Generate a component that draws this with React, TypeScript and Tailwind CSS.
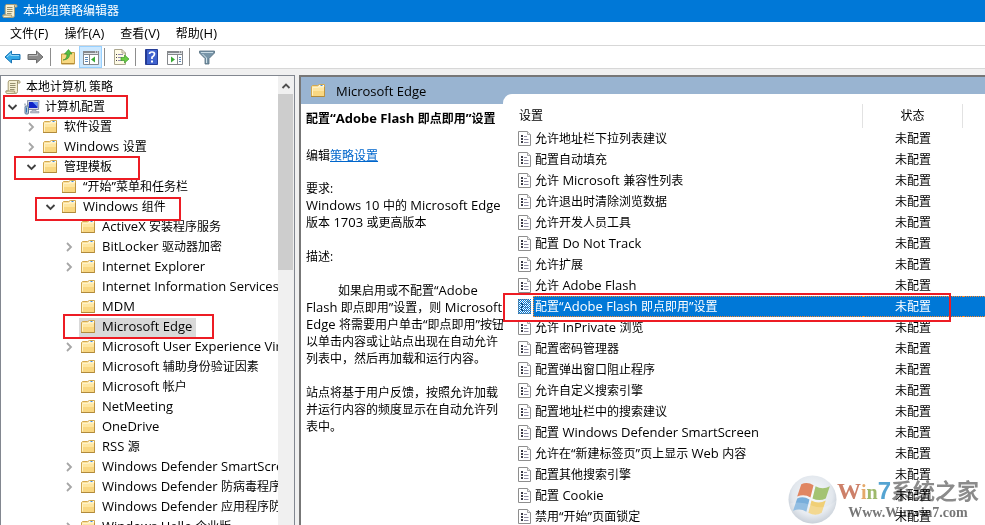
import * as React from "react";

type IconName = "scroll" | "computer" | "folder";

type TreeRow = {
  label: string;
  level: number;
  icon?: IconName;
  state?: "open" | "closed";
  selected?: boolean;
  mark?: string;
};

const menus = ["文件(F)", "操作(A)", "查看(V)", "帮助(H)"];

const indents = ["pl-[5px]", "pl-[24px]", "pl-[43px]", "pl-[62px]"];

const tree: TreeRow[] = [
  { label: "计算机配置", level: 0, icon: "computer", state: "open", mark: "left-[2px] -top-[2px] w-[125px] h-[24px]" },
  { label: "软件设置", level: 1, state: "closed" },
  { label: "Windows 设置", level: 1, state: "closed" },
  { label: "管理模板", level: 1, state: "open", mark: "left-[13px] -top-[1px] w-[126px] h-[24px]" },
  { label: "“开始”菜单和任务栏", level: 2 },
  { label: "Windows 组件", level: 2, state: "open", mark: "left-[34px] top-0 w-[146px] h-[24px]" },
  { label: "ActiveX 安装程序服务", level: 3 },
  { label: "BitLocker 驱动器加密", level: 3, state: "closed" },
  { label: "Internet Explorer", level: 3, state: "closed" },
  { label: "Internet Information Services", level: 3 },
  { label: "MDM", level: 3 },
  { label: "Microsoft Edge", level: 3, selected: true, mark: "left-[62px] -top-[3px] w-[151px] h-[25px]" },
  { label: "Microsoft User Experience Virtualization", level: 3, state: "closed" },
  { label: "Microsoft 辅助身份验证因素", level: 3 },
  { label: "Microsoft 帐户", level: 3 },
  { label: "NetMeeting", level: 3 },
  { label: "OneDrive", level: 3 },
  { label: "RSS 源", level: 3 },
  { label: "Windows Defender SmartScreen", level: 3, state: "closed" },
  { label: "Windows Defender 防病毒程序", level: 3, state: "closed" },
  { label: "Windows Defender 应用程序防护", level: 3 },
  { label: "Windows Hello 企业版", level: 3, state: "closed" },
];

const settings = [
  "允许地址栏下拉列表建议",
  "配置自动填充",
  "允许 Microsoft 兼容性列表",
  "允许退出时清除浏览数据",
  "允许开发人员工具",
  "配置 Do Not Track",
  "允许扩展",
  "允许 Adobe Flash",
  "配置“Adobe Flash 即点即用”设置",
  "允许 InPrivate 浏览",
  "配置密码管理器",
  "配置弹出窗口阻止程序",
  "允许自定义搜索引擎",
  "配置地址栏中的搜索建议",
  "配置 Windows Defender SmartScreen",
  "允许在“新建标签页”页上显示 Web 内容",
  "配置其他搜索引擎",
  "配置 Cookie",
  "禁用“开始”页面锁定",
];

const SELECTED = 8;

// Latin runs are set one size above the Chinese text around them
function Mixed({ text }: { text: string }) {
  return (
    <>
      {text.split(/([\x20-\x7e“”]+)/).map((run, i) =>
        i % 2 ? <span key={i} className="text-[13px] leading-3">{run}</span> : run
      )}
    </>
  );
}

function FolderIcon() {
  return (
    <svg width="16" height="16" viewBox="0 0 16 16" className="shrink-0">
      <path d="M0.5 13.5V3.5L1.5 2.5H6.5L8.5 1.5H13.5V13.5Z" fill="#fbe099" stroke="#d2a850" />
      <path d="M8.5 2H13V4H7Z" fill="#fff" />
      <path d="M9.5 2.5H11.5" stroke="#3f8fd8" />
      <path d="M1 4.5H7L8 3.5H13V9H1Z" fill="#fee6a2" />
      <path d="M1 8H13V13H1Z" fill="#f9d781" />
      <path d="M1.5 12.5V4.5H7L8 4H13" stroke="#fff2c6" fill="none" />
      <path d="M0 13.5H14" stroke="#b08a3c" />
      <path d="M13.5 4V14" stroke="#bd9443" />
    </svg>
  );
}

function ScrollIcon() {
  return (
    <svg width="16" height="16" viewBox="0 0 16 16" className="shrink-0">
      <path d="M4 1.5H13.5Q15.5 1.5 15 4H12.5V12.5Q12.5 14.5 10.5 14.5H2Q0.5 14.5 0.8 12H3.2V3Z" fill="#f5efd2" stroke="#a89e78" />
      <path d="M12.5 4V2.5Q13 1.5 14 2" fill="none" stroke="#8d8464" />
      <path d="M1 12H9.5Q9.5 14.5 11 14.5" fill="#ded4aa" stroke="#a89e78" />
      <path d="M5 4.5H10.5M5 6.5H10.5M5 8.5H10.5M5 10.5H9.5" stroke="#96906f" />
    </svg>
  );
}

function ComputerIcon() {
  return (
    <svg width="16" height="16" viewBox="0 0 16 16" className="shrink-0">
      <path d="M3.5 1.5H15L14.5 10.5H4Z" fill="#d8dbe4" stroke="#8c93a8" />
      <path d="M5 3H13.5V9H5Z" fill="#1024c8" />
      <path d="M8.5 3H13.5V8Z" fill="#6796f2" />
      <path d="M8 11H12V12.5H15V14H6.5V12.5H8Z" fill="#b9bdc9" stroke="#858c9e" strokeWidth="0.5" />
      <rect x="1" y="7" width="3.5" height="8" rx="1" fill="#b9c9d8" stroke="#5e7996" />
      <path d="M2.5 8.5V13.5" stroke="#2c72b4" />
      <path d="M1 6.5V4.5M4 6.5V4.5" stroke="#6f8299" />
    </svg>
  );
}

function TreeIcon({ name = "folder" }: { name?: IconName }) {
  if (name === "scroll") return <ScrollIcon />;
  if (name === "computer") return <ComputerIcon />;
  return <FolderIcon />;
}

function Chevron({ state }: { state?: "open" | "closed" }) {
  if (!state) return <span className="w-[13px] shrink-0" />;
  return (
    <button type="button" aria-label={state === "open" ? "折叠" : "展开"} className="w-[13px] shrink-0">
      <svg width="13" height="14" viewBox="0 0 13 14" fill="none" strokeWidth="1.8">
        {state === "open" ? (
          <path d="M2.5 5L6.5 9L10.5 5" stroke="#404040" />
        ) : (
          <path d="M4 3L8 7L4 11" stroke="#a6a6a6" />
        )}
      </svg>
    </button>
  );
}

function SettingIcon({ dithered }: { dithered: boolean }) {
  return (
    <svg width="13" height="15" viewBox="0 0 13 15" className="shrink-0">
      <defs>
        <pattern id="dither" width="2" height="2" patternUnits="userSpaceOnUse">
          <path d="M0 0H1V1H0ZM1 1H2V2H1Z" fill="#0078d7" />
        </pattern>
      </defs>
      <path d="M0.5 0.5H9.5L12.5 3.5V14.5H0.5Z" fill="#fff" stroke="#8e8e8e" />
      <path d="M9.5 0.5V3.5H12.5" fill="#eee" stroke="#a5a5a5" />
      <path d="M3 4H5V6H3ZM3 7H5V9H3ZM3 10H5V12H3Z" fill="#3a3a44" />
      <path d="M6 5.5H9M6 8.5H10.5M6 11.5H10.5" stroke="#8d8aa0" />
      {dithered && <rect width="13" height="15" fill="url(#dither)" />}
    </svg>
  );
}

function Separator() {
  return <span className="h-[18px] w-px bg-[#8d8d8d]" />;
}

function ToolButton({ label, active, children }: { label: string; active?: boolean; children: React.ReactNode }) {
  return (
    <button
      type="button"
      aria-label={label}
      className={`flex h-[22px] w-[23px] items-center justify-center border ${active ? "border-[#99d1ff] bg-[#cce8ff]" : "border-transparent"}`}
    >
      {children}
    </button>
  );
}

function PaneIcon({ flipped }: { flipped?: boolean }) {
  return (
    <svg width="16" height="15" viewBox="0 0 16 15">
      <path d="M0.5 1.5H15.5V14.5H0.5Z" fill="#fff" stroke="#85888c" />
      <path d="M0 1H16V5H0Z" fill="#85888c" />
      <path d="M1 3.5H15" stroke="#dfe3e7" />
      <path d="M12 2H13M14 2H15" stroke="#fff" />
      {flipped ? (
        <>
          <path d="M10.5 5V14" stroke="#85888c" />
          <path d="M12 7.5H14M12 9.5H14M12 11.5H14" stroke="#5a87b8" />
          <path d="M4 6.5L8 9.5L4 12.5Z" fill="#39a935" />
        </>
      ) : (
        <>
          <path d="M6.5 5V14" stroke="#85888c" />
          <path d="M2 7.5H5M2 9.5H5M2 11.5H5" stroke="#5a87b8" />
          <path d="M12 6.5L8 9.5L12 12.5Z" fill="#39a935" />
        </>
      )}
    </svg>
  );
}

function Toolbar() {
  return (
    <div className="flex h-[23px] items-center border-b border-[#d7d7d7] bg-white pl-[1px]">
      <ToolButton label="后退">
        <svg width="17" height="14" viewBox="0 0 17 14">
          <path d="M1 7L7.5 1V4.5H16V9.5H7.5V13Z" fill="#35a9e6" stroke="#1874b5" strokeLinejoin="round" />
          <path d="M3 7L6.8 3.5V5.5H15" fill="none" stroke="#96d9f8" />
        </svg>
      </ToolButton>
      <ToolButton label="前进">
        <svg width="17" height="14" viewBox="0 0 17 14">
          <path d="M16 7L9.5 1V4.5H1V9.5H9.5V13Z" fill="#8c8c8c" stroke="#6c6c6c" strokeLinejoin="round" />
          <path d="M2 5.5H10.5V3.5" fill="none" stroke="#bcbcbc" />
        </svg>
      </ToolButton>
      <div className="flex items-center pl-[3px]">
        <Separator />
      </div>
      <div className="flex items-center pl-[5px]">
        <ToolButton label="上移一级">
          <svg width="16" height="16" viewBox="0 0 16 16">
            <path d="M1.5 15V5H7L8.5 3.5H14.5V15Z" fill="#f8d982" stroke="#c49d45" />
            <path d="M2 14.5H14" stroke="#b58c37" />
            <path d="M3 11Q7 10.5 7 5H4.5L8.5 0.5L12 5H9.5Q10 10.5 3 11Z" fill="#55bd42" stroke="#2d8b2a" strokeWidth="0.6" />
          </svg>
        </ToolButton>
        <ToolButton label="显示/隐藏控制台树" active>
          <PaneIcon />
        </ToolButton>
      </div>
      <div className="flex items-center px-[2px]">
        <Separator />
      </div>
      <div className="flex items-center pl-[3px] pr-[2px]">
        <ToolButton label="导出列表">
          <svg width="17" height="16" viewBox="0 0 17 16">
            <path d="M1.5 0.5H9L12.5 4V15.5H1.5Z" fill="#fffbe5" stroke="#aaa58e" />
            <path d="M9 0.5V4H12.5" fill="none" stroke="#aaa58e" />
            <path d="M3 5.5H4M3 8.5H4M3 11.5H4" stroke="#444" />
            <path d="M5 5.5H10M5 8.5H9M5 11.5H9" stroke="#9088b0" />
            <path d="M8 8.5H11.5V6L16 10L11.5 14V11.5H8Z" fill="#6dcc45" stroke="#3a9b2b" strokeWidth="0.7" />
          </svg>
        </ToolButton>
      </div>
      <Separator />
      <div className="flex items-center pl-[4px]">
        <ToolButton label="帮助">
          <svg width="13" height="16" viewBox="0 0 13 16">
            <path d="M0.5 0.5H12.5V15.5H0.5Z" fill="#3f62ce" stroke="#263d96" />
            <path d="M1.5 1V15" stroke="#243a94" />
            <path d="M4.5 5Q4.5 3 7 3Q9.5 3 9.5 5Q9.5 6.500 7 8.2V10" fill="none" stroke="#fff" strokeWidth="1.7" />
            <path d="M6 11.5H8V13.5H6Z" fill="#fff" />
          </svg>
        </ToolButton>
        <ToolButton label="显示/隐藏操作窗格">
          <PaneIcon flipped />
        </ToolButton>
      </div>
      <div className="flex items-center px-[3px]">
        <Separator />
      </div>
      <div className="flex items-center pl-[2px]">
        <ToolButton label="筛选器">
          <svg width="16" height="15" viewBox="0 0 16 15">
            <path d="M0.5 1H15.5V3L10 8.5V14H6V8.5L0.5 3Z" fill="#7895a8" stroke="#536d7e" strokeWidth="0.8" />
            <path d="M2 2.5H14" stroke="#c8dae4" />
            <path d="M3.5 4L7.5 8V13" fill="none" stroke="#d0e0e8" />
          </svg>
        </ToolButton>
      </div>
    </div>
  );
}

function TreePanel() {
  return (
    <nav className="flex w-[295px] shrink-0 border border-b-0 border-[#828790] bg-white">
      <ul className="min-w-0 flex-1 pt-px">
        <li className="flex h-5 items-center gap-[5px] pl-1">
          <TreeIcon name="scroll" />
          <span>本地计算机 策略</span>
        </li>
        {tree.map((row) => (
          <li key={row.label} className="relative">
            <div className={`flex h-5 items-center gap-[5px] overflow-hidden ${indents[row.level]}`}>
              <Chevron state={row.state} />
              <button
                type="button"
                className={`-ml-[2px] flex h-[19px] items-center gap-[5px] whitespace-nowrap pl-[2px] pr-1 ${row.selected ? "bg-[#d9d9d9]" : ""}`}
              >
                <TreeIcon name={row.icon} />
                <span><Mixed text={row.label} /></span>
              </button>
            </div>
            {row.mark && <span className={`pointer-events-none absolute z-10 border-2 border-[#ed1c24] ${row.mark}`} />}
          </li>
        ))}
      </ul>
      <div className="flex w-4 shrink-0 flex-col bg-[#f0f0f0] pt-px">
        <button type="button" aria-label="向上滚动" className="flex h-[17px] items-center justify-center">
          <svg width="10" height="8" viewBox="0 0 10 8" fill="none" stroke="#505050" strokeWidth="1.8">
            <path d="M1.5 6L5 2.5L8.5 6" />
          </svg>
        </button>
        <div className="mr-px h-[176px] bg-[#cdcdcd]" />
      </div>
    </nav>
  );
}

function Description() {
  return (
    <section className="flex w-[202px] shrink-0 flex-col">
      <div className="flex h-[27px] shrink-0 items-center gap-[9px] pl-[10px]">
        <FolderIcon />
        <span className="whitespace-nowrap text-[13px]">Microsoft Edge</span>
      </div>
      <div className="flex-1 whitespace-nowrap bg-white pl-[5px] pt-[6px] leading-[17px]">
        <h1 className="font-bold"><Mixed text="配置“Adobe Flash 即点即用”设置" /></h1>
        <p className="pt-5">
          编辑<a href="#policy" className="text-[#0066cc] underline">策略设置</a>
        </p>
        <div className="pt-4">
          <p>要求:</p>
          <p><Mixed text="Windows 10 中的 Microsoft Edge" /></p>
          <p><Mixed text="版本 1703 或更高版本" /></p>
        </div>
        <p className="pt-[17px]">描述:</p>
        <div className="pt-[17px]">
          <p className="pl-8"><Mixed text="如果启用或不配置“Adobe" /></p>
          <p><Mixed text="Flash 即点即用”设置，则 Microsoft" /></p>
          <p><Mixed text="Edge 将需要用户单击“即点即用”按钮" /></p>
          <p>以单击内容或让站点出现在自动允许</p>
          <p>列表中，然后再加载和运行内容。</p>
        </div>
        <div className="pt-[17px]">
          <p>站点将基于用户反馈，按照允许加载</p>
          <p>并运行内容的频度显示在自动允许列</p>
          <p>表中。</p>
        </div>
      </div>
    </section>
  );
}

function SettingsTable() {
  return (
    <section className="min-w-0 flex-1 pt-[17px]">
      <div className="h-full rounded-tl-[9px] bg-white">
        <table className="w-full table-fixed border-collapse">
          <colgroup>
            <col />
            <col className="w-[100px]" />
            <col className="w-[22px]" />
          </colgroup>
          <thead>
            <tr className="h-[34px] align-bottom">
              <th className="p-0 text-left font-normal">
                <div className="flex h-6 items-center border-r border-[#e2e2e2] pl-4">设置</div>
              </th>
              <th className="p-0 font-normal">
                <div className="flex h-6 items-center justify-center border-r border-[#e2e2e2]">状态</div>
              </th>
              <th className="p-0" />
            </tr>
          </thead>
          <tbody>
            {settings.map((name, i) => {
              const selected = i === SELECTED;
              const fill = selected ? "border-y border-dotted border-[#ff8728] bg-[#0078d7] text-white" : "";
              return (
                <tr key={name} className="h-[21px]">
                  <td className="relative p-0">
                    <div className="flex h-[21px] items-center gap-[2px] pl-[15px]">
                      <SettingIcon dithered={selected} />
                      <div className={`flex h-full min-w-0 flex-1 items-center whitespace-nowrap ${fill} ${selected ? "border-l pl-px" : "pl-[2px]"}`}>
                        <span><Mixed text={name} /></span>
                      </div>
                    </div>
                    {selected && (
                      <span className="pointer-events-none absolute -right-[88px] -top-[3px] left-0 z-10 h-[29px] border-2 border-[#ed1c24]" />
                    )}
                  </td>
                  <td className="p-0 text-center">
                    <div className={`flex h-[21px] items-center justify-center ${fill}`}>未配置</div>
                  </td>
                  <td className="p-0">
                    <div className={`h-[21px] ${fill}`} />
                  </td>
                </tr>
              );
            })}
          </tbody>
        </table>
      </div>
    </section>
  );
}

function Watermark() {
  return (
    <div className="pointer-events-none absolute bottom-px right-[6px] z-20 flex items-center mix-blend-multiply">
      <svg width="49" height="49" viewBox="0 0 48 48">
        <defs>
          <radialGradient id="orb" cx="50%" cy="40%" r="60%">
            <stop offset="0" stopColor="#f9fbfd" />
            <stop offset="0.7" stopColor="#e2e7ed" />
            <stop offset="1" stopColor="#bcc5d0" />
          </radialGradient>
        </defs>
        <circle cx="24" cy="24" r="23.5" fill="url(#orb)" />
        <path d="M13 9Q19 6 25 10L22 22Q16 18 9 21Z" fill="#e08662" />
        <path d="M27 11Q34 15 41 11L37 23Q31 26 24 23Z" fill="#a3c373" />
        <path d="M9 23Q15 20 21 24L18 36Q12 32 5 35Z" fill="#78aedb" />
        <path d="M23 25Q30 29 37 25L33 37Q27 41 20 37Z" fill="#f0cf76" />
        <path d="M1 28Q12 25 24 30T47 25Q45 47 24 47.5Q4 46 1 28Z" fill="#fff" opacity="0.2" />
      </svg>
      <div className="flex flex-col items-center whitespace-nowrap font-bold">
        <div className="flex items-baseline font-['Liberation_Serif','Noto_Sans_CJK_SC',serif] text-[24px] leading-[26px]">
          <span className="text-[#cd8069]">W</span>
          <span className="text-[20px] text-[#e5a96a]">i</span>
          <span className="text-[20px] text-[#9eb96b]">n</span>
          <span className="font-['Liberation_Sans',sans-serif] text-[#55a4d2]">7</span>
          <span className="text-[22px] text-[#8b8b8b]">系统之家</span>
        </div>
        <div className="font-['Liberation_Serif',serif] text-[14px] leading-[16px] text-[#777]">Www.Winwin7.com</div>
      </div>
    </div>
  );
}

export default function App() {
  return (
    <div className="relative flex h-screen flex-col overflow-hidden bg-[#f0f0f0] font-['Open_Sans','Noto_Sans_CJK_SC',sans-serif] text-[12px] leading-4 text-black">
      <header className="flex h-[22px] shrink-0 items-center gap-[5px] bg-[#0078d7] pl-[2px] text-white">
        <ScrollIcon />
        <span>本地组策略编辑器</span>
      </header>
      <div className="flex h-6 shrink-0 items-center gap-4 border-b border-[#d7d7d7] bg-white pl-[10px]">
        {menus.map((menu) => (
          <button key={menu} type="button"><Mixed text={menu} /></button>
        ))}
      </div>
      <Toolbar />
      <main className="flex min-h-0 flex-1 gap-1 overflow-hidden pt-[6px]">
        <TreePanel />
        <div className="flex min-w-0 flex-1 border-l-2 border-t-2 border-[#777] bg-[#99b4d1]">
          <Description />
          <SettingsTable />
        </div>
      </main>
      <Watermark />
    </div>
  );
}
